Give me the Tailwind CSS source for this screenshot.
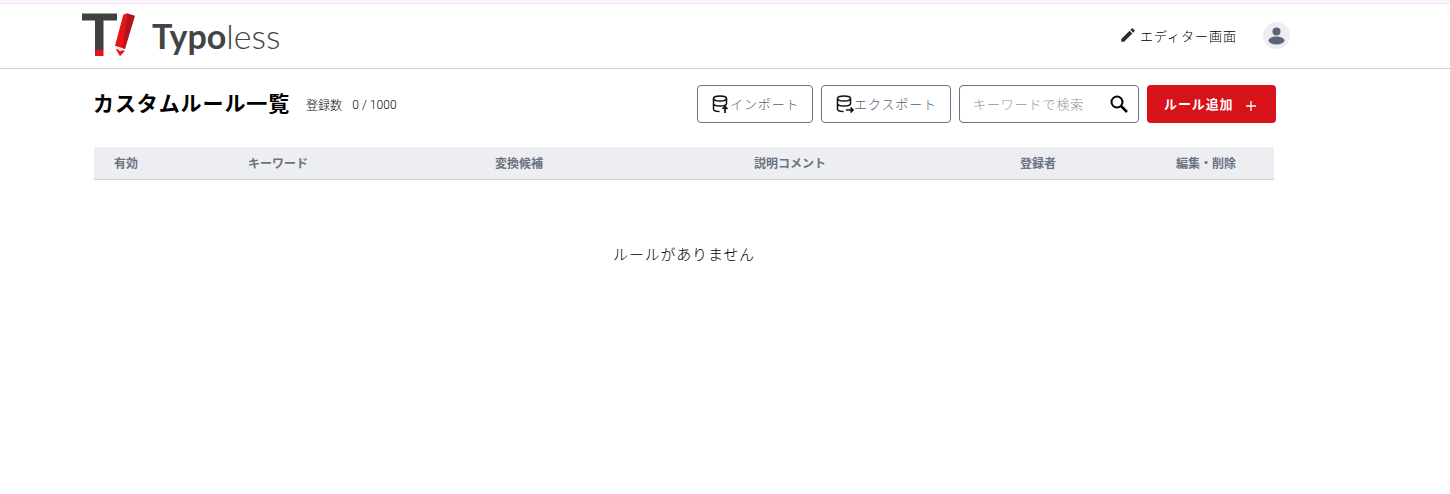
<!doctype html>
<html lang="ja">
<head>
<meta charset="utf-8">
<script src="https://cdn.jsdelivr.net/npm/@tailwindcss/browser@4"></script>
</head>
<body class="bg-white font-['Noto_Sans_CJK_JP','Noto_Sans',sans-serif] h-[494px] overflow-hidden">
<div class="h-[4px] bg-[#fdf5fd] border-b border-[#f7e2f7]"></div>
<header class="h-[65px] border-b border-b-[#cbd2de] flex items-center justify-between pl-[82px] pr-[160px]">
  <div class="flex items-center -mt-[1px]">
    <svg width="54" height="46" viewBox="0 0 54 46" class="shrink-0">
      <path d="M0 0.500H35V7.500H21.500V37H13V7.500H0Z" fill="#404040"/>
      <rect x="13" y="37" width="8.500" height="6" fill="#e8141c"/>
      <path d="M41.300 1.700L45 .3L43 36L33 32.700Z" fill="#e8141c"/>
      <path d="M45 .3L53 2.700L43 36L41 35Z" fill="#b3131a"/>
      <path d="M33.700 36L43 37.700L38 43.300Z" fill="#e8141c"/>
      <path d="M33.700 34L42 36.500L38 38.500Z" fill="#f6dada"/>
    </svg>
    <div class="ml-[16px] font-['Lato',sans-serif] text-[34px] leading-none text-[#444] mt-[1px]"><span class="font-bold">Typo</span><span class="font-light">less</span></div>
  </div>
  <div class="flex items-center -mt-[2px]">
    <svg width="18" height="18" viewBox="0 0 24 24" fill="#2b2b2b"><path d="M3 17.250V21h3.750L17.810 9.940l-3.750-3.750L3 17.250zM20.710 7.040a1 1 0 0 0 0-1.410l-2.340-2.340a1 1 0 0 0-1.410 0l-1.830 1.830 3.750 3.750 1.830-1.830z"/></svg>
    <span class="ml-[3px] text-[13px] leading-none font-light text-black tracking-[1px]">エディター画面</span>
    <div class="ml-[26px] w-[27px] h-[27px] rounded-full bg-[#eceef2] flex items-center justify-center">
      <svg width="19" height="19" viewBox="0 0 19 19" fill="#5b6478"><circle cx="9.500" cy="5.500" r="4"/><ellipse cx="9.500" cy="14.500" rx="8" ry="4"/></svg>
    </div>
  </div>
</header>
<main class="pl-[93px] w-[1276px]">
  <div class="flex items-center justify-between pt-[16px] h-[54px]">
    <div class="flex items-center">
      <h1 class="text-[21px] leading-none font-bold text-black tracking-[0.9px] -mt-[3px]">カスタムルール一覧</h1>
      <span class="ml-[16px] text-[12px] leading-none font-light text-black mt-[1px]">登録数</span>
      <span class="ml-[10px] text-[12px] leading-none text-black font-['Roboto',sans-serif] font-light mt-[1px] tracking-[0.1px]">0 / 1000</span>
    </div>
    <div class="flex items-center gap-2">
      <button class="h-[38px] w-[116px] border border-[#667085] rounded-[4px] flex items-center pl-[13px] text-[13px] font-light tracking-[0.9px] text-[#4f6475]">
        <svg width="20" height="20" viewBox="0 0 20 20" fill="none" stroke="#111" stroke-width="1.5" class="shrink-0"><ellipse cx="9" cy="4.500" rx="6.500" ry="2.500"/><path d="M2.500 4.500V15c0 1.400 2.500 2.500 6 2.500M15.500 4.500V10M2.500 9.500c0 1.400 2.900 2.500 6.500 2.500s6.500-1.100 6.500-2.500"/><path d="M14 19v-6M11.500 15l2.500-2.500L16.500 15" stroke-width="1.700"/></svg>
        <span class="-ml-[1px] -mt-[1px]">インポート</span>
      </button>
      <button class="h-[38px] w-[130px] border border-[#667085] rounded-[4px] flex items-center pl-[13px] text-[13px] font-light tracking-[0.9px] text-[#4f6475]">
        <svg width="20" height="20" viewBox="0 0 20 20" fill="none" stroke="#111" stroke-width="1.5" class="shrink-0"><ellipse cx="9" cy="4.500" rx="6.500" ry="2.500"/><path d="M2.500 4.500V15c0 1.400 2.500 2.500 6 2.500M15.500 4.500V10M2.500 9.500c0 1.400 2.900 2.500 6.500 2.500s6.500-1.100 6.500-2.500"/><path d="M11 16h7M15.500 13.500L18 16l-2.500 2.500" stroke-width="1.700"/></svg>
        <span class="-ml-[1px] -mt-[1px]">エクスポート</span>
      </button>
      <div class="h-[38px] w-[180px] border border-[#667085] rounded-[4px] flex items-center justify-between pl-[13px] pr-[9px]">
        <span class="text-[13px] font-light tracking-[0.9px] text-[#8f959e]">キーワードで検索</span>
        <svg width="20" height="20" viewBox="0 0 20 20" fill="none" stroke="#000" stroke-width="2" class="-mt-[1px]"><circle cx="8" cy="8" r="5.500"/><path d="M12 12l6 6" stroke-width="2.500"/></svg>
      </div>
      <button class="h-[38px] w-[129px] bg-[#d71218] rounded-[4px] flex items-center pl-[17px] text-[13px] tracking-[0.9px] font-bold text-white">
        <span class="-mt-[1px]">ルール追加</span>
        <svg width="12" height="12" viewBox="0 0 12 12" stroke="#fff" stroke-width="1.300" class="ml-[11px] mt-[3px]"><path d="M6 1v10M1 6h10"/></svg>
      </button>
    </div>
  </div>
  <div class="ml-[1px] mt-[24px] w-[1180px] h-[33px] bg-[#edeef2] border-b border-[#cbd2de] grid grid-cols-[154px_247px_259px_266px_156px_98px] items-center text-[12px] font-bold text-[#6b7280]">
    <span class="pl-[20px]">有効</span>
    <span>キーワード</span>
    <span>変換候補</span>
    <span>説明コメント</span>
    <span>登録者</span>
    <span>編集・削除</span>
  </div>
  <p class="ml-[1px] w-[1180px] mt-[63px] text-center text-[15px] leading-[22px] font-light text-black tracking-[0.8px]">ルールがありません</p>
</main>
</body>
</html>
